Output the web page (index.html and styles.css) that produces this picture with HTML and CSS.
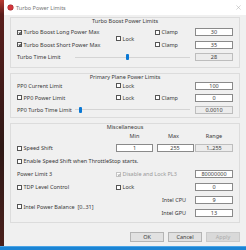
FILE: index.html
```html
<!DOCTYPE html>
<html lang="en">
    <head>
        <meta charset="UTF-8">
        <title>Turbo Power Limits</title>
        <link rel="stylesheet" href="styles.css">
    </head>
    <body>
        <div class="desktop">
            <div class="backdrop"></div>
            <div class="window">
                <div class="titlebar">
                    <span class="app-icon"></span>
                    <span class="title">Turbo Power Limits</span>
                    <svg class="close" viewBox="0 0 6 6"><path d="M0.5 0.5 L5.5 5.5 M5.5 0.5 L0.5 5.5"/></svg>
                </div>
                <div class="content">
                    <section class="group turbo">
                        <div class="group-title">Turbo Boost Power Limits</div>
                        <div class="grid">
                            <label class="check c1 checked"><span class="box"></span>Turbo Boost Long Power Max</label>
                            <label class="check c2 lock"><span class="box"></span>Lock</label>
                            <label class="check c3"><span class="box"></span>Clamp</label>
                            <span class="field c4">30</span>
                            <label class="check c1 checked"><span class="box"></span>Turbo Boost Short Power Max</label>
                            <label class="check c3"><span class="box"></span>Clamp</label>
                            <span class="field c4">35</span>
                            <div class="slider-row">
                                <span class="slider-label">Turbo Time Limit</span>
                                <span class="slider"><span class="thumb" style="left: 44%"></span></span>
                            </div>
                            <span class="field c4 readonly">28</span>
                        </div>
                    </section>

                    <section class="group plane">
                        <div class="group-title">Primary Plane Power Limits</div>
                        <div class="grid">
                            <span class="c1 text">PP0 Current Limit</span>
                            <label class="check c2"><span class="box"></span>Lock</label>
                            <span class="field c4">100</span>
                            <label class="check c1"><span class="box"></span>PP0 Power Limit</label>
                            <label class="check c2"><span class="box"></span>Lock</label>
                            <label class="check c3"><span class="box"></span>Clamp</label>
                            <span class="field c4">0</span>
                            <div class="slider-row">
                                <span class="slider-label">PP0 Turbo Time Limit</span>
                                <span class="slider"><span class="thumb" style="left: 3.5%"></span></span>
                            </div>
                            <span class="field c4 readonly">0.0010</span>
                        </div>
                    </section>

                    <section class="group misc">
                        <div class="group-title">Miscellaneous</div>
                        <div class="grid">
                            <span class="c2 head">Min</span>
                            <span class="c3 head">Max</span>
                            <span class="c4 head">Range</span>
                            <label class="check c1"><span class="box"></span>Speed Shift</label>
                            <span class="field c2 small">1</span>
                            <span class="field c3 small">255</span>
                            <span class="field c4 readonly">1..255</span>
                            <label class="check wide"><span class="box"></span>Enable Speed Shift when ThrottleStop starts.</label>
                            <span class="c1 text">Power Limit 3</span>
                            <label class="check c23 checked disabled"><span class="box"></span>Disable and Lock PL3</label>
                            <span class="field c4">80000000</span>
                            <label class="check c1"><span class="box"></span>TDP Level Control</label>
                            <label class="check c2"><span class="box"></span>Lock</label>
                            <span class="field c4">0</span>
                            <label class="check balance"><span class="box"></span>Intel Power Balance&nbsp;&nbsp;[0..31]</label>
                            <span class="c3 text right">Intel CPU</span>
                            <span class="field c4">9</span>
                            <span class="c3 text right">Intel GPU</span>
                            <span class="field c4">13</span>
                        </div>
                    </section>
                </div>
                <div class="buttons">
                    <button class="btn">OK</button>
                    <button class="btn">Cancel</button>
                    <button class="btn" disabled>Apply</button>
                </div>
            </div>
        </div>
        <div class="taskbar"></div>
    </body>
</html>
```

FILE: styles.css
```css
* {
    box-sizing: border-box;
}
html, body {
    margin: 0;
}
body {
    width: 246px;
    height: 250px;
    overflow: hidden;
    display: flex;
    flex-direction: column;
    font-family: "Noto Sans", sans-serif;
    font-size: 5.5px;
    color: #3a3a3a;
}

.desktop {
    flex: 1;
    display: flex;
    min-height: 0;
}
.backdrop {
    width: 4px;
    background: linear-gradient(#b83a32 0, #5a1e1c 14px, #2e1816 60%, #4a201c);
}
.window {
    flex: 1;
    display: flex;
    flex-direction: column;
    background: #f0f0f0;
}

.titlebar {
    height: 15px;
    background: #fff;
    display: flex;
    align-items: center;
    gap: 3px;
    padding: 0 5px 0 4px;
}
.app-icon {
    width: 5px;
    height: 5px;
    border-radius: 50%;
    background: #d3363c;
    box-shadow: 0 0 0 0.5px #9a1e22;
}
.title {
    flex: 1;
    color: #777;
}
.close {
    width: 5px;
    height: 5px;
    stroke: #aaa;
    stroke-width: 0.6;
}

.content {
    padding: 2px 6px 0;
}
.group {
    border: 1px solid #dcdcdc;
    padding: 0 6px;
}
.group + .group {
    margin-top: 5px;
}
.group-title {
    text-align: center;
    line-height: 6px;
}
.grid {
    display: grid;
    grid-template-columns: 99px 39px 40px 38px;
    align-items: center;
}
.turbo .grid {
    grid-auto-rows: 12.5px;
    padding: 2px 0 3px;
}
.plane .grid {
    grid-auto-rows: 12px;
    padding-bottom: 1px;
}
.misc .grid {
    grid-template-rows: 12px repeat(6, 13px);
    padding-bottom: 2px;
}

.c1 { grid-column: 1; }
.c2 { grid-column: 2; }
.c3 { grid-column: 3; }
.c4 { grid-column: 4; }
.c23 { grid-column: 2 / 4; }
.wide { grid-column: 1 / 5; }
.lock { grid-row: span 2; }
.balance {
    grid-column: 1 / 3;
    grid-row: span 2;
}

.text {
    white-space: nowrap;
}
.right {
    justify-self: end;
    padding-right: 9px;
}
.head {
    width: 37px;
    text-align: center;
}
.c4.head {
    width: 38px;
}

.check {
    display: flex;
    align-items: center;
    gap: 1.5px;
    white-space: nowrap;
}
.box {
    position: relative;
    width: 5px;
    height: 5px;
    flex: none;
    border: 0.6px solid #555;
    background: #fff;
}
.checked .box::after {
    content: "";
    position: absolute;
    left: 1.3px;
    top: 0.2px;
    width: 1.2px;
    height: 2.4px;
    border: solid #444;
    border-width: 0 0.5px 0.5px 0;
    transform: rotate(45deg);
}
.disabled {
    color: #999;
}
.disabled .box {
    border-color: #c4c4c4;
}
.disabled .box::after {
    border-color: #b0b0b0;
}

.field {
    height: 8px;
    line-height: 6.4px;
    border: 0.6px solid #8a8a8a;
    background: #fff;
    text-align: center;
}
.field.small {
    width: 37px;
}
.c3.small {
    justify-self: center;
}
.field.readonly {
    background: #ececec;
    border-color: #bdbdbd;
}

.slider-row {
    grid-column: 1 / 4;
    display: flex;
    align-items: center;
    padding-right: 5px;
}
.slider-label {
    width: 58px;
    white-space: nowrap;
}
.slider {
    position: relative;
    flex: 1;
    height: 6px;
}
.slider::before {
    content: "";
    position: absolute;
    left: 0;
    right: 0;
    top: 2.5px;
    height: 1px;
    background: #d4d4d4;
}
.thumb {
    position: absolute;
    top: 0;
    width: 3px;
    height: 6px;
    border-radius: 1px;
    background: #0a78d4;
}

.buttons {
    display: flex;
    justify-content: flex-end;
    gap: 4px;
    padding: 9.5px 6px 0;
}
.btn {
    width: 34px;
    height: 10px;
    padding: 0;
    font: inherit;
    color: #3a3a3a;
    background: #e1e1e1;
    border: 0.6px solid #b4b4b4;
}
.btn:disabled {
    color: #ababab;
    background: #d9d9d9;
    border-color: #cacaca;
}

.taskbar {
    height: 4px;
    background: #1b84d4;
    border-top: 1px solid #4aa4e6;
}
```
